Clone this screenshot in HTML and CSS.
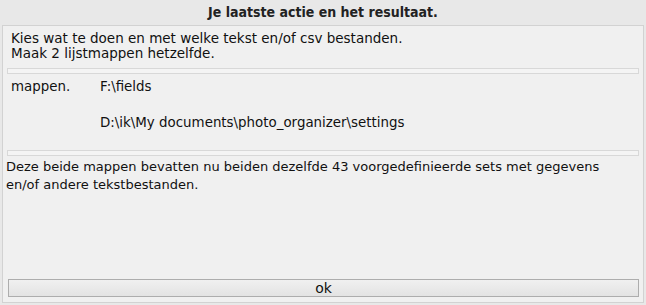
FILE: index.html
```html
<!DOCTYPE html>
<html lang="nl">
<head>
    <meta charset="UTF-8">
    <title>Je laatste actie en het resultaat.</title>
    <link rel="stylesheet" href="styles.css">
</head>
<body>
    <div class="dialog">
        <h1 class="title">Je laatste actie en het resultaat.</h1>
        <div class="panel">
            <p class="intro">Kies wat te doen en met welke tekst en/of csv bestanden.<br>Maak 2 lijstmappen hetzelfde.</p>
            <div class="groove"></div>
            <div class="folders">
                <span class="label">mappen.</span>
                <div class="paths">
                    <span>F:\fields</span>
                    <span>D:\ik\My documents\photo_organizer\settings</span>
                </div>
            </div>
            <div class="groove"></div>
            <p class="result">Deze beide mappen bevatten nu beiden dezelfde 43 voorgedefinieerde sets met gegevens<br>en/of andere tekstbestanden.</p>
            <button class="ok-button">ok</button>
        </div>
    </div>
</body>
</html>
```

FILE: styles.css
```css
body {
    margin: 0;
    background: #e8e8e8;
    font-family: "DejaVu Sans", Verdana, sans-serif;
    font-size: 13px;
    color: #111;
}

.dialog {
    display: flex;
    flex-direction: column;
    height: 305px;
}

.title {
    margin: 0;
    height: 25px;
    line-height: 24px;
    text-align: center;
    font-family: "DejaVu Sans Condensed", "DejaVu Sans", sans-serif;
    font-size: 14px;
    font-weight: bold;
    color: #222;
}

.panel {
    margin: 0 2px 2px 2px;
    flex: 1;
    display: flex;
    flex-direction: column;
    background: #f0f0f0;
    border: 1px solid #d2d2d2;
}

.intro {
    margin: 5px 0 0 0;
    padding-left: 8px;
    font-size: 13.5px;
    line-height: 15px;
}

.groove {
    margin: 7px 4px 0 4px;
    height: 4px;
    border: 1px solid #d8d8d8;
    background: #f4f4f4;
}

.folders {
    display: flex;
    padding: 5px 0 0 8px;
    font-size: 13.4px;
    line-height: 15px;
}

.label {
    width: 89px;
}

.paths {
    display: flex;
    flex-direction: column;
    gap: 21px;
}

.folders + .groove {
    margin-top: 20px;
}

.result {
    margin: 2px 0 0 0;
    padding-left: 3px;
    line-height: 18px;
}

.ok-button {
    margin: auto 4px 5px 5px;
    height: 18px;
    padding: 0;
    font-family: "DejaVu Sans", Verdana, sans-serif;
    font-size: 14px;
    line-height: 14px;
    color: #111;
    border: 1px solid #adadad;
    background: linear-gradient(#f0f0f0, #e3e3e3);
}
```
